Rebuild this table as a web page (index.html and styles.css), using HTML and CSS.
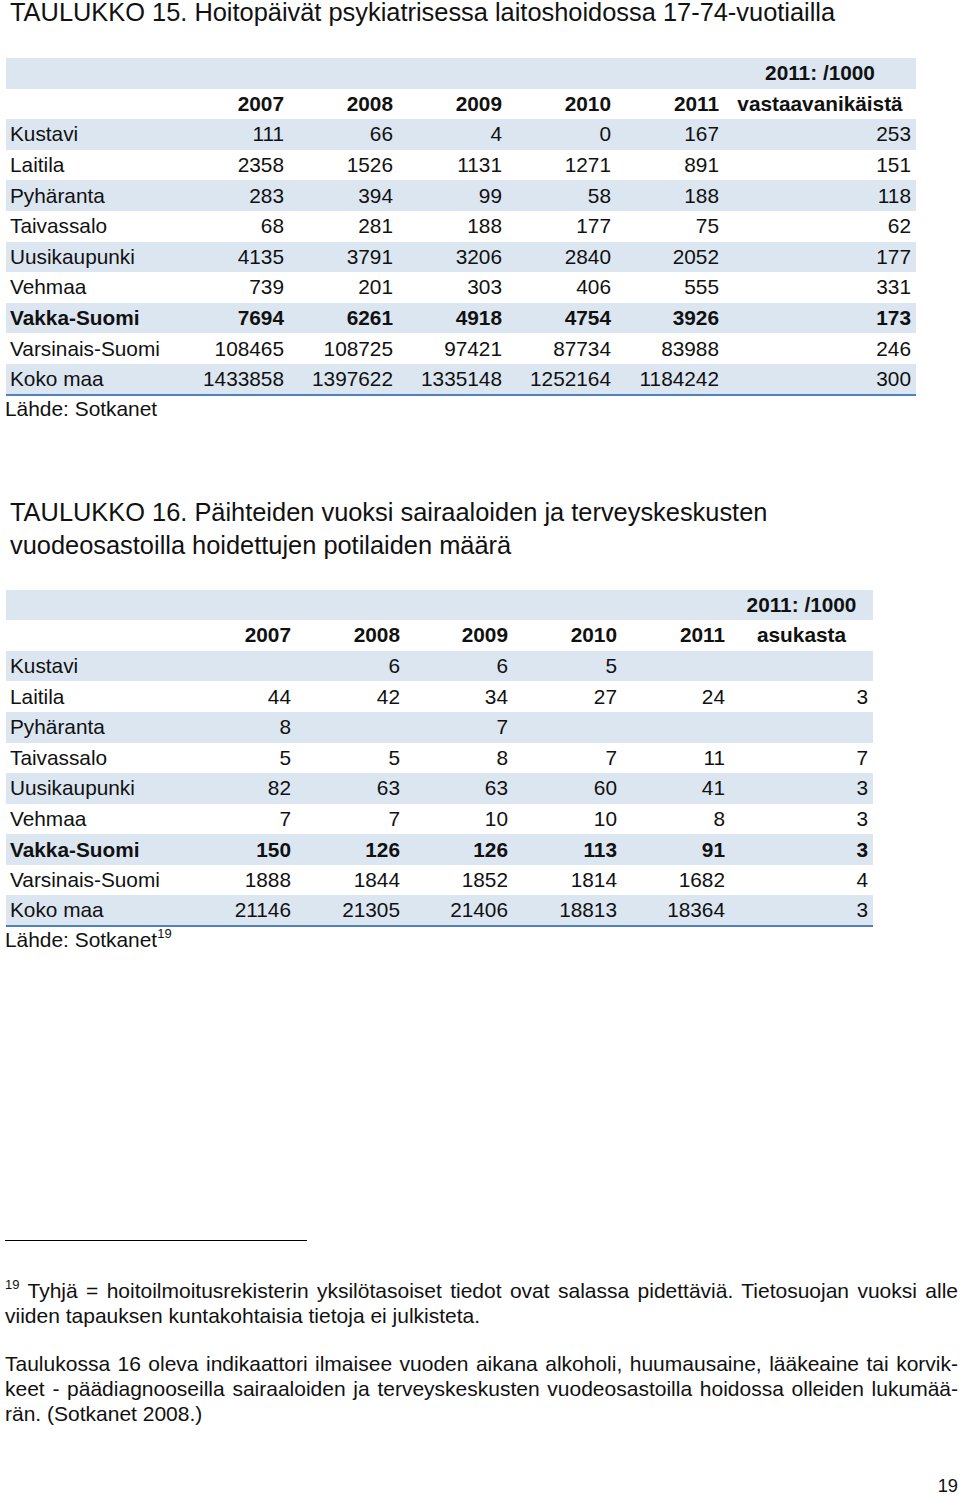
FILE: index.html
```html
<!DOCTYPE html>
<html lang="fi">
<head>
<meta charset="utf-8">
<title>Taulukot 15 ja 16</title>
<link rel="stylesheet" href="styles.css">
</head>
<body>
<div class="page">
  <h2 class="title title-1">TAULUKKO 15. Hoitopäivät psykiatrisessa laitoshoidossa 17-74-vuotiailla</h2>

  <table class="data t15">
    <colgroup>
      <col class="c-label1"><col class="c-n"><col class="c-n"><col class="c-n"><col class="c-n"><col class="c-n2"><col class="c-last1">
    </colgroup>
    <tr class="band head"><td></td><td></td><td></td><td></td><td></td><td></td><td class="hc">2011: /1000</td></tr>
    <tr class="head"><td></td><td>2007</td><td>2008</td><td>2009</td><td>2010</td><td>2011</td><td class="hc">vastaavanikäistä</td></tr>
    <tr class="band"><td>Kustavi</td><td>111</td><td>66</td><td>4</td><td>0</td><td>167</td><td>253</td></tr>
    <tr><td>Laitila</td><td>2358</td><td>1526</td><td>1131</td><td>1271</td><td>891</td><td>151</td></tr>
    <tr class="band"><td>Pyhäranta</td><td>283</td><td>394</td><td>99</td><td>58</td><td>188</td><td>118</td></tr>
    <tr><td>Taivassalo</td><td>68</td><td>281</td><td>188</td><td>177</td><td>75</td><td>62</td></tr>
    <tr class="band"><td>Uusikaupunki</td><td>4135</td><td>3791</td><td>3206</td><td>2840</td><td>2052</td><td>177</td></tr>
    <tr><td>Vehmaa</td><td>739</td><td>201</td><td>303</td><td>406</td><td>555</td><td>331</td></tr>
    <tr class="band strong"><td>Vakka-Suomi</td><td>7694</td><td>6261</td><td>4918</td><td>4754</td><td>3926</td><td>173</td></tr>
    <tr><td>Varsinais-Suomi</td><td>108465</td><td>108725</td><td>97421</td><td>87734</td><td>83988</td><td>246</td></tr>
    <tr class="band last"><td>Koko maa</td><td>1433858</td><td>1397622</td><td>1335148</td><td>1252164</td><td>1184242</td><td>300</td></tr>
  </table>
  <p class="source">Lähde: Sotkanet</p>

  <h2 class="title title-2">TAULUKKO 16. Päihteiden vuoksi sairaaloiden ja terveyskeskusten<br>vuodeosastoilla hoidettujen potilaiden määrä</h2>

  <table class="data t16">
    <colgroup>
      <col class="c-label2"><col class="c-n"><col class="c-n"><col class="c-n2"><col class="c-n"><col class="c-n2"><col class="c-last2">
    </colgroup>
    <tr class="band head"><td></td><td></td><td></td><td></td><td></td><td></td><td class="hc">2011: /1000</td></tr>
    <tr class="head"><td></td><td>2007</td><td>2008</td><td>2009</td><td>2010</td><td>2011</td><td class="hc">asukasta</td></tr>
    <tr class="band"><td>Kustavi</td><td></td><td>6</td><td>6</td><td>5</td><td></td><td></td></tr>
    <tr><td>Laitila</td><td>44</td><td>42</td><td>34</td><td>27</td><td>24</td><td>3</td></tr>
    <tr class="band"><td>Pyhäranta</td><td>8</td><td></td><td>7</td><td></td><td></td><td></td></tr>
    <tr><td>Taivassalo</td><td>5</td><td>5</td><td>8</td><td>7</td><td>11</td><td>7</td></tr>
    <tr class="band"><td>Uusikaupunki</td><td>82</td><td>63</td><td>63</td><td>60</td><td>41</td><td>3</td></tr>
    <tr><td>Vehmaa</td><td>7</td><td>7</td><td>10</td><td>10</td><td>8</td><td>3</td></tr>
    <tr class="band strong"><td>Vakka-Suomi</td><td>150</td><td>126</td><td>126</td><td>113</td><td>91</td><td>3</td></tr>
    <tr><td>Varsinais-Suomi</td><td>1888</td><td>1844</td><td>1852</td><td>1814</td><td>1682</td><td>4</td></tr>
    <tr class="band last"><td>Koko maa</td><td>21146</td><td>21305</td><td>21406</td><td>18813</td><td>18364</td><td>3</td></tr>
  </table>
  <p class="source">Lähde: Sotkanet<sup class="ref">19</sup></p>

  <hr class="fn-rule">

  <div class="footnote">
    <div class="jline"><sup class="fn-mark">19</sup> Tyhjä = hoitoilmoitusrekisterin yksilötasoiset tiedot ovat salassa pidettäviä. Tietosuojan vuoksi alle</div>
    <div>viiden tapauksen kuntakohtaisia tietoja ei julkisteta.</div>
  </div>

  <div class="para">
    <div class="jline">Taulukossa 16 oleva indikaattori ilmaisee vuoden aikana alkoholi, huumausaine, lääkeaine tai korvik-</div>
    <div class="jline">keet - päädiagnooseilla sairaaloiden ja terveyskeskusten vuodeosastoilla hoidossa olleiden lukumää-</div>
    <div>rän. (Sotkanet 2008.)</div>
  </div>

  <div class="pagenum">19</div>
</div>
</body>
</html>
```

FILE: styles.css
```css
html, body {
  margin: 0;
  padding: 0;
  background: #fff;
}

body {
  font-family: "Liberation Sans", Arial, Helvetica, sans-serif;
  color: #111;
}

.page {
  width: 960px;
  height: 1498px;
  box-sizing: border-box;
  padding: 0 2px 0 5px;
  display: flex;
  flex-direction: column;
}

.title {
  font-weight: normal;
  font-size: 25.4px;
  margin: 0;
  padding-left: 5px;
  white-space: nowrap;
}

.title-1 {
  line-height: 24px;
}

.title-2 {
  line-height: 33px;
  margin-top: 74px;
}

.data {
  border-collapse: collapse;
  font-size: 20.8px;
  margin-left: 1px;
  table-layout: fixed;
}

.t15 {
  width: 910px;
  margin-top: 34px;
}

.t16 {
  width: 867px;
  margin-top: 28px;
}

.c-label1 { width: 174px; }
.c-label2 { width: 181px; }
.c-n { width: 109px; }
.c-n2 { width: 108px; }
.c-last1 { width: 192px; }
.c-last2 { width: 143px; }

.data tr {
  height: 30.6px;
}

.data td {
  padding: 0 5px 0 4px;
  text-align: right;
  vertical-align: middle;
  white-space: nowrap;
  line-height: 22px;
}

.data td:first-child {
  text-align: left;
}

.data td.hc {
  text-align: center;
  padding: 0;
}

.band {
  background: #dce6f1;
}

.head td,
.strong td {
  font-weight: bold;
}

.last td {
  border-bottom: 2px solid #4f81bd;
}

.source {
  margin: 0;
  font-size: 20.9px;
  line-height: 26px;
}

.ref {
  font-size: 13px;
  line-height: 0;
  vertical-align: 9px;
}

.fn-rule {
  border: 0;
  border-top: 1px solid #000;
  width: 302px;
  margin: 287px 0 0 0;
  height: 0;
}

.footnote {
  margin-top: 37px;
  font-size: 21px;
  line-height: 25px;
}

.para {
  margin-top: 23px;
  font-size: 21px;
  line-height: 25px;
}

.jline {
  text-align: justify;
  text-align-last: justify;
}

.fn-mark {
  font-size: 13px;
  line-height: 0;
  vertical-align: 9px;
}

.pagenum {
  margin-top: auto;
  align-self: flex-end;
  font-size: 18.3px;
  line-height: 25px;
  height: 25px;
}
```
